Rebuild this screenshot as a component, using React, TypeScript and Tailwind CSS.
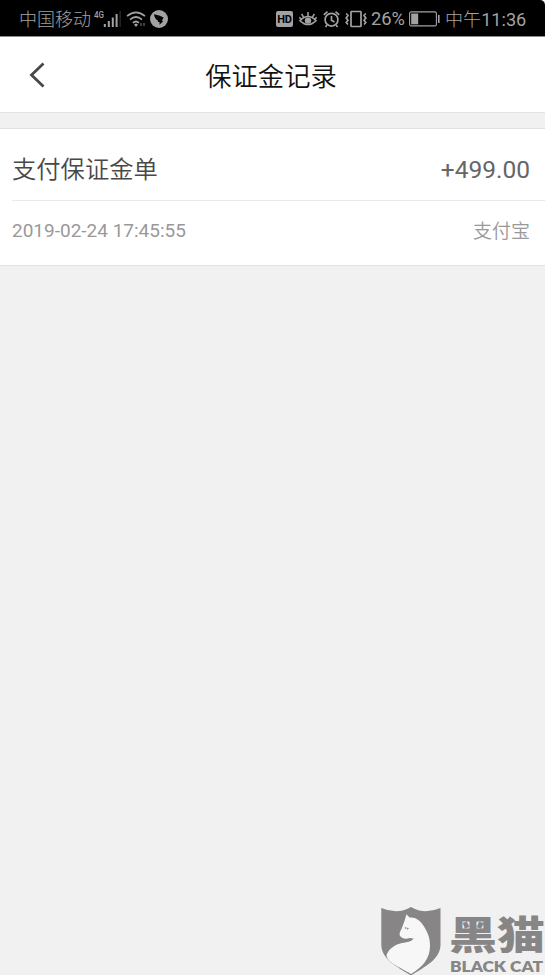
function SignalIcon() {
  return (
    <svg width="27" height="20" viewBox="0 0 27 20" fill="currentColor" className="ml-[3px] shrink-0">
      <text x="0" y="8.5" fontSize="9.5" fontWeight="500" textLength="10" lengthAdjust="spacingAndGlyphs">4G</text>
      <rect x="9.8" y="15" width="2" height="3" />
      <rect x="13.8" y="12" width="2" height="6" />
      <rect x="17.8" y="8.5" width="2" height="9.5" />
      <rect x="21.6" y="5" width="2" height="13" />
      <rect x="25.6" y="2" width="1" height="16" opacity=".35" />
    </svg>
  );
}

function WifiIcon() {
  return (
    <svg width="20" height="18" viewBox="0 0 20 18" fill="none" stroke="currentColor" strokeWidth="1.7" className="ml-[5px] shrink-0">
      <path d="M1 6.2Q10-1.6 19 6.2M4 9.6Q10 4.4 16 9.6M6.8 12.8Q10 10.2 13 12.8" />
      <path d="M8 14.6 10 13.6l2 1-2 2.4z" fill="currentColor" stroke="none" />
      <path d="M15 16v-3M18 13v3" strokeWidth="1.3" opacity=".6" />
    </svg>
  );
}

function AppBadgeIcon() {
  return (
    <svg width="18" height="18" viewBox="0 0 18 18" className="ml-[4px] shrink-0">
      <circle cx="9" cy="9" r="9" fill="currentColor" />
      <path d="M4 4.2Q9.5 4.8 13.6 7.6L12 10.6l1 .8-3.6 3.4.3-2.6-1.9-.4.4-1.1C5.8 9.7 4.4 7.3 4 4.2z" fill="#000" />
    </svg>
  );
}

function EyeIcon() {
  return (
    <svg width="18" height="18" viewBox="0 0 18 18" fill="none" stroke="currentColor" strokeWidth="1.5" className="ml-[6px] shrink-0">
      <path d="M1 10.6Q9 2.6 17 10.6 9 18.6 1 10.6z" />
      <circle cx="9" cy="10.6" r="3.2" fill="currentColor" stroke="none" />
      <path d="M9 6.2V2M4.6 7.2 2.6 4M13.4 7.2l2-3.2M1.8 9 .4 7.2M16.2 9l1.4-1.8" />
    </svg>
  );
}

function AlarmIcon() {
  return (
    <svg width="17" height="18" viewBox="0 0 17 18" fill="none" stroke="currentColor" strokeWidth="1.7" className="ml-[6px] shrink-0">
      <circle cx="8.5" cy="9.7" r="6.4" />
      <path d="M8.5 6v4.3l3 1.7M.8 4.8 4.5 1.6M16.2 4.8l-3.7-3.2M4 15l-1.5 2M13 15l1.5 2" />
    </svg>
  );
}

function VibrateIcon() {
  return (
    <svg width="22" height="18" viewBox="0 0 22 18" fill="none" stroke="currentColor" strokeWidth="1.7" className="ml-[5px] shrink-0">
      <rect x="6" y="1.5" width="10" height="15" rx=".6" />
      <path d="M1.2 3.5 3 5.5 1.2 8 3 10.2 1.2 12.5 3 14.5M20.8 3.5 19 5.5 20.8 8 19 10.2l1.8 2.3-1.8 2" />
    </svg>
  );
}

function BatteryIcon() {
  return (
    <svg width="31" height="16" viewBox="0 0 31 16" className="ml-[5px] shrink-0">
      <rect x=".6" y=".9" width="26.8" height="14" rx="1.5" fill="none" stroke="currentColor" strokeWidth="1.1" />
      <rect x="2.2" y="2.5" width="7" height="10.8" fill="currentColor" />
      <rect x="29" y="4" width="1.6" height="8" fill="currentColor" />
    </svg>
  );
}

function StatusBar() {
  return (
    <div className="flex h-[37px] shrink-0 items-center rounded-tr-[5px] border-b border-[#8a8a8a] bg-black pt-[2px] pl-[19px] text-[18px] leading-none font-light text-[#a2a2a2]">
      <span className="w-[72px] pt-[2px] whitespace-nowrap">中国移动</span>
      <SignalIcon />
      <WifiIcon />
      <AppBadgeIcon />
      <span className="ml-[108px] flex h-[16px] w-[17px] shrink-0 items-center justify-center rounded-[2px] bg-[#a2a2a2] text-[11px] font-bold tracking-tight text-black">
        HD
      </span>
      <EyeIcon />
      <AlarmIcon />
      <VibrateIcon />
      <span className="ml-[4px] w-[33px] pt-px text-[18.3px] font-normal whitespace-nowrap">26%</span>
      <BatteryIcon />
      <span className="ml-[5px] pt-[2px] text-[18.1px] whitespace-nowrap">
        中午<span className="font-normal">11:36</span>
      </span>
    </div>
  );
}

function Header() {
  return (
    <header className="flex h-[76px] shrink-0 items-center border-b border-[#e4e4e4] bg-white">
      <svg width="18" height="28" viewBox="0 0 18 28" fill="none" stroke="#484848" strokeWidth="2.8" className="ml-[28px] shrink-0">
        <path d="M15.5 2.5 3.5 14l12 11.5" />
      </svg>
      <h1 className="flex-1 pt-[5px] pr-[49px] text-center text-[26.3px] leading-none font-[350] text-[#111]">保证金记录</h1>
    </header>
  );
}

function RecordCard() {
  return (
    <section className="mt-[15px] shrink-0 border-y border-[#e2e2e2] bg-white pl-[12px]">
      <div className="flex h-[72px] items-center justify-between border-b border-[#e9e9e9] pt-[11px] pr-[15px] text-[24.3px] leading-none">
        <span className="font-[350] text-[#484848]">支付保证金单</span>
        <span className="text-[24.5px] text-[#666]">+499.00</span>
      </div>
      <div className="flex h-[64px] items-center justify-between pr-[15px] pb-[5px] text-[19px] leading-none text-[#999]">
        <span>2019-02-24 17:45:55</span>
        <span className="pt-[2px] font-[350]">支付宝</span>
      </div>
    </section>
  );
}

function Watermark() {
  return (
    <div className="mt-auto ml-[381px] flex h-[70px] shrink-0 text-[#878586]">
      <svg width="60" height="70" viewBox="0 0 60 70" className="shrink-0">
        <path
          d="M.3 3Q17 10 30 2 43 10 59.5 3V40C59 55 43 62 30 70.500 17 62 .8 55 .3 40z"
          fill="currentColor"
        />
        <path
          d="M25.500 9.300 28.500 12.500C35 12 39.500 15.500 43 21.500 47 28 49 33 49 41 49 53 42 62 30 69 20 62.500 6 58 5.500 50 8 43.500 14 39.500 21 38 27 37 31 36.500 32.500 33.500L28.500 33C25 34.500 20 33.500 18.800 30.500 18 28 19.500 26 20.500 24L23.500 16z"
          fill="#f7f7f7"
        />
        <path d="m24 23.500 1.200-1.200m.8 2 1.400-1.300" stroke="currentColor" strokeWidth="1.200" />
      </svg>
      <svg width="95" height="70" viewBox="0 0 95 70" fill="currentColor" className="ml-[9px] shrink-0">
        <text x="-1" y="43.500" fontSize="38.500" fontWeight="900" textLength="96" lengthAdjust="spacingAndGlyphs">
          黑猫
        </text>
        <text x="0" y="67.300" fontSize="14" fontWeight="800" textLength="93" lengthAdjust="spacingAndGlyphs" className="font-['Lato']">
          BLACK CAT
        </text>
      </svg>
    </div>
  );
}

export default function App() {
  return (
    <div className="min-h-screen bg-white font-['Roboto','Noto_Sans_CJK_SC',sans-serif]">
      <div className="flex h-[975px] w-[545px] flex-col overflow-hidden bg-[#f1f1f1]">
        <StatusBar />
        <Header />
        <RecordCard />
        <Watermark />
      </div>
    </div>
  );
}
